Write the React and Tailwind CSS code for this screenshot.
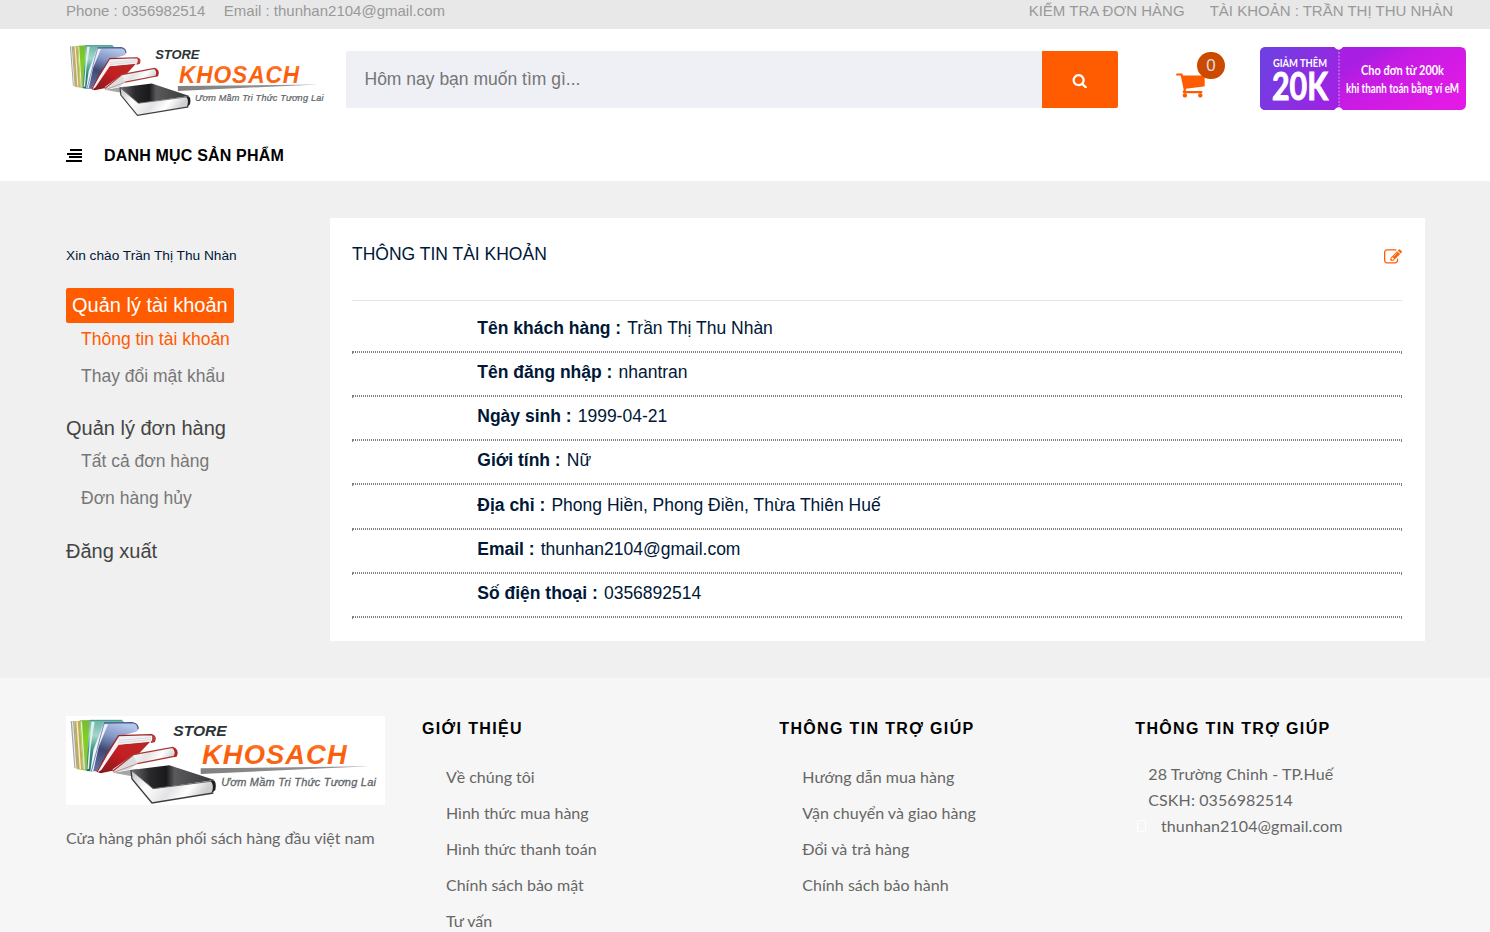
import React from "react";

const FA = {
  search:
    "M1216 832q0-185-131.5-316.5t-316.5-131.5-316.5 131.5-131.5 316.5 131.5 316.5 316.5 131.5 316.5-131.5 131.5-316.5zm512 832q0 52-38 90t-90 38q-54 0-90-38l-343-342q-179 124-399 124-143 0-273.5-55.5t-225-150-150-225-55.5-273.5 55.5-273.5 150-225 225-150 273.5-55.5 273.5 55.5 225 150 150 225 55.5 273.5q0 220-124 399l343 343q37 37 37 90z",
  cart:
    "M704 1536q0 52-38 90t-90 38-90-38-38-90 38-90 90-38 90 38 38 90zm896 0q0 52-38 90t-90 38-90-38-38-90 38-90 90-38 90 38 38 90zm128-1088v512q0 24-16.5 42.5t-40.5 21.5l-1044 122q13 60 13 70 0 16-24 64h920q26 0 45 19t19 45-19 45-45 19h-1024q-26 0-45-19t-19-45q0-11 8-31.5t16-36 21.5-40 15.5-29.5l-177-823h-204q-26 0-45-19t-19-45 19-45 45-19h256q16 0 28.5 6.5t19.5 15.5 13 24.5 8 26 5.5 29.5 4.5 26h1201q26 0 45 19t19 45z",
  edit:
    "M888 1184l116-116-152-152-116 116v56h96v96h56zm440-720q-16-16-33 1l-350 350q-17 17-1 33t33-1l350-350q17-17 1-33zm80 594v190q0 119-84.5 203.5t-203.5 84.5h-832q-119 0-203.5-84.5t-84.5-203.5v-832q0-119 84.5-203.5t203.5-84.5h832q63 0 117 25 15 7 18 23 3 17-9 29l-49 49q-14 14-32 8-23-6-45-6h-832q-66 0-113 47t-47 113v832q0 66 47 113t113 47h832q66 0 113-47t47-113v-126q0-13 9-22l64-64q15-15 35-7t20 29zm-96-738l288 288-672 672h-288v-288zm444 132l-92 92-288-288 92-92q28-28 68-28t68 28l152 152q28 28 28 68t-28 68z",
};

function Icon({ name, className }) {
  return (
    <svg viewBox="0 0 1792 1792" fill="currentColor" className={className}>
      <path d={FA[name]} />
    </svg>
  );
}

function Logo({ id, className }) {
  const ref = (n) => `url(#${id}-${n})`;
  return (
    <svg viewBox="48 48 957 267" preserveAspectRatio="none" className={className}>
      <defs>
        <linearGradient id={`${id}-green`} x1="0" y1="0" x2="0" y2="1">
          <stop offset="0" stopColor="#7cb83a" />
          <stop offset="0.35" stopColor="#7fd01f" />
          <stop offset="1" stopColor="#9fb45e" />
        </linearGradient>
        <linearGradient id={`${id}-teal`} x1="0" y1="0" x2="0" y2="1">
          <stop offset="0" stopColor="#6bb3a4" />
          <stop offset="0.3" stopColor="#a5d6cb" />
          <stop offset="0.6" stopColor="#2f9480" />
          <stop offset="1" stopColor="#177061" />
        </linearGradient>
        <linearGradient id={`${id}-blue`} x1="0.6" y1="0" x2="0.3" y2="1">
          <stop offset="0" stopColor="#b4c6e8" />
          <stop offset="0.3" stopColor="#8396c6" />
          <stop offset="0.6" stopColor="#3f4870" />
          <stop offset="1" stopColor="#5f6fa3" />
        </linearGradient>
        <linearGradient id={`${id}-red`} x1="1" y1="0" x2="0" y2="1">
          <stop offset="0" stopColor="#b22a26" />
          <stop offset="0.45" stopColor="#c51f22" />
          <stop offset="1" stopColor="#84171a" />
        </linearGradient>
        <linearGradient id={`${id}-black`} x1="0" y1="0" x2="1" y2="0">
          <stop offset="0" stopColor="#6d6d70" />
          <stop offset="0.22" stopColor="#2a2a2c" />
          <stop offset="0.42" stopColor="#19191b" />
          <stop offset="0.52" stopColor="#5a5a5d" />
          <stop offset="1" stopColor="#38383a" />
        </linearGradient>
        <linearGradient id={`${id}-page`} x1="0" y1="0" x2="1" y2="0.3">
          <stop offset="0" stopColor="#bfbfc2" />
          <stop offset="0.3" stopColor="#fff" />
          <stop offset="0.6" stopColor="#e3e3e5" />
          <stop offset="0.8" stopColor="#fff" />
          <stop offset="1" stopColor="#cfcfd2" />
        </linearGradient>
        <linearGradient id={`${id}-orange`} x1="0" y1="0" x2="0" y2="1">
          <stop offset="0" stopColor="#ff8a3c" />
          <stop offset="0.45" stopColor="#fb5a08" />
          <stop offset="1" stopColor="#f4702a" />
        </linearGradient>
        <linearGradient id={`${id}-rule`} x1="0" y1="0" x2="1" y2="0">
          <stop offset="0" stopColor="#808080" />
          <stop offset="1" stopColor="#999" />
        </linearGradient>
      </defs>
      <rect x="48" y="48" width="957" height="267" fill="#fff" />
      <path d="M190 218L262 206L254 236L242 228Z" fill="#a5a5a5" />
      <path d="M62 64L73 63L84 206L73 204Z" fill="#a4a79f" />
      <path d="M66 64L69 64L79 204L76 204Z" fill="#f2f2ee" />
      <path d="M73 64L90 62L99 210L82 208Z" fill="#c2ad55" />
      <path d="M79 64L83 64L93 207L89 207Z" fill="#f4f0da" />
      <path d="M90 61L124 60L112 213L99 210Z" fill={ref("green")} />
      <path d="M92 64L96 64L105 208L101 208Z" fill="#e2efc2" />
      <path d="M118 60L216 60L226 70L165 80L122 214L110 213Z" fill={ref("teal")} />
      <path d="M124 65L134 65L122 140L117 206L112 208Z" fill="#dff0ec" />
      <path d="M119 61L216 61" stroke="#3f9a88" strokeWidth="3" />
      <path d="M162 69L247 68L264 80L262 94L208 110L146 214L122 214L128 160Z" fill={ref("blue")} />
      <path d="M160 72L174 73L146 140L130 213L121 213L130 150Z" fill="#eff2f8" />
      <path d="M162 72L154 100L124 214" fill="none" stroke="#7489b5" strokeWidth="3" />
      <path d="M162 69L247 68Q266 72 264 88" fill="none" stroke="#4b5f96" strokeWidth="4" />
      <path d="M200 134L302 124L262 166L216 206L152 220L142 216Z" fill={ref("red")} />
      <path d="M206 108L304 104L303 125L206 134L154 210L144 216L141 212Z" fill="#f1f1f3" />
      <path d="M206 128L302 119M206 121L303 113" stroke="#cfcfd3" strokeWidth="2" />
      <path d="M141 216L170 164L206 107L304 104Q320 108 313 124L303 127" fill="none" stroke="#9c2527" strokeWidth="4" />
      <path d="M304 104Q320 108 313 124L303 127Q310 112 304 104Z" fill="#c5383a" />
      <path d="M250 164L368 142L374 168L262 190L240 208L190 218L188 208Z" fill={ref("page")} />
      <path d="M250 166L262 190L240 208L190 217L192 208Z" fill="#dcdcdf" />
      <path d="M188 214L250 164L368 142Q386 148 379 168L262 191" fill="none" stroke="#a83a34" strokeWidth="4" />
      <path d="M262 191L190 218" fill="none" stroke="#a06a68" strokeWidth="2" />
      <path d="M366 142Q388 147 379 169L371 171Q378 154 366 142Z" fill="#b02124" />
      <path d="M243 210L308 264L488 243L492 277L306 309L246 236Z" fill={ref("page")} />
      <path d="M243 210L358 196L494 240L310 266Z" fill={ref("black")} />
      <path d="M243 210L309 266L490 243" fill="none" stroke="#68686b" strokeWidth="3" />
      <path d="M243 210L246 237L306 309L490 279" fill="none" stroke="#3c3c3e" strokeWidth="4" />
      <path d="M482 242Q502 236 496 270L484 280Q494 258 482 242Z" fill="#1d1d1f" />
      <text x="370" y="109" textLength="160" lengthAdjust="spacingAndGlyphs" fontFamily="Liberation Sans, sans-serif" fontWeight="bold" fontStyle="italic" fontSize="46" fill="#2c3438">STORE</text>
      <text x="456" y="193" textLength="434" lengthAdjust="spacing" fontFamily="Liberation Sans, sans-serif" fontWeight="bold" fontStyle="italic" fontSize="82" fill={ref("orange")}>KHOSACH</text>
      <path d="M452 205L960 199L452 222Z" fill={ref("rule")} />
      <text x="514" y="258" textLength="464" lengthAdjust="spacing" fontFamily="Liberation Sans, sans-serif" fontStyle="italic" fontSize="33" fill="#5d6468" stroke="#5d6468" strokeWidth="0.800">Ươm Mầm Tri Thức Tương Lai</text>
    </svg>
  );
}

function Voucher() {
  return (
    <svg viewBox="0 0 206 63" className="h-[63px] w-[206px]">
      <defs>
        <linearGradient id="v-left" x1="0" y1="0.3" x2="1" y2="0.7">
          <stop offset="0" stopColor="#6f3fe2" />
          <stop offset="1" stopColor="#9f22e2" />
        </linearGradient>
        <linearGradient id="v-right" x1="0.38" y1="0.4" x2="1" y2="0.7">
          <stop offset="0" stopColor="#a81ee2" />
          <stop offset="0.25" stopColor="#c41be4" />
          <stop offset="1" stopColor="#e31ae6" />
        </linearGradient>
      </defs>
      <path d="M6 0H74Q78.500 6 83 0H200Q206 0 206 6V57Q206 63 200 63H83Q78.500 57 74 63H6Q0 63 0 57V6Q0 0 6 0Z" fill="url(#v-right)" />
      <path d="M6 0H74Q76 3 79 3V60Q76 60 74 63H6Q0 63 0 57V6Q0 0 6 0Z" fill="url(#v-left)" />
      <path d="M79 5V59" stroke="#c99af0" strokeWidth="1" strokeDasharray="2 1.500" />
      <g fill="#fff" fontFamily="Lato, sans-serif" fontWeight="bold">
        <text x="13" y="19.500" fontSize="11" textLength="54" lengthAdjust="spacingAndGlyphs">GIẢM THÊM</text>
        <text x="12" y="53" fontSize="37.500" stroke="#fff" strokeWidth="1" textLength="56" lengthAdjust="spacingAndGlyphs">20K</text>
        <text x="101" y="27.500" fontSize="13.500" textLength="83" lengthAdjust="spacingAndGlyphs">Cho đơn từ 200k</text>
        <text x="86" y="45.500" fontSize="12.500" textLength="113" lengthAdjust="spacingAndGlyphs">khi thanh toán bằng ví eM</text>
      </g>
    </svg>
  );
}

const profile = [
  ["Tên khách hàng :", "Trần Thị Thu Nhàn"],
  ["Tên đăng nhập :", "nhantran"],
  ["Ngày sinh :", "1999-04-21"],
  ["Giới tính :", "Nữ"],
  ["Địa chỉ :", "Phong Hiền, Phong Điền, Thừa Thiên Huế"],
  ["Email :", "thunhan2104@gmail.com"],
  ["Số điện thoại :", "0356892514"],
];

const about = ["Về chúng tôi", "Hình thức mua hàng", "Hình thức thanh toán", "Chính sách bảo mật", "Tư vấn"];
const help = ["Hướng dẫn mua hàng", "Vận chuyển và giao hàng", "Đổi và trả hàng", "Chính sách bảo hành"];

function FooterTitle({ children }) {
  return (
    <h4 className="pt-px font-['Liberation_Sans',sans-serif] text-[16px] leading-6 font-bold tracking-[1.35px] whitespace-nowrap text-black">
      {children}
    </h4>
  );
}

function FooterLinks({ items }) {
  return (
    <ul className="mt-[18px] pl-6">
      {items.map((t) => (
        <li key={t} className="h-9 leading-9 whitespace-nowrap">{t}</li>
      ))}
    </ul>
  );
}

export default function App() {
  return (
    <div className="h-[932px] w-[1490px] overflow-hidden bg-[#f0f0f0] font-['Liberation_Sans',Arial,sans-serif] text-[17.5px] text-[#001737]">
      <div className="flex h-[29px] justify-between bg-[#e8e8e8] pr-[37px] pl-[66px] text-[15px] leading-[22px] text-[#999]">
        <div className="flex gap-[18.500px]">
          <span>Phone : 0356982514</span>
          <span>Email : thunhan2104@gmail.com</span>
        </div>
        <div className="flex gap-[25px]">
          <span>KIỂM TRA ĐƠN HÀNG</span>
          <span>TÀI KHOẢN : TRẦN THỊ THU NHÀN</span>
        </div>
      </div>

      <header className="h-[152px] bg-white">
        <div className="flex h-[101px] items-start pl-[66px]">
          <Logo id="top" className="mt-[13px] h-[75px] w-[265px]" />
          <div className="mt-[22px] ml-[15px] flex h-[57px] w-[772px] overflow-hidden rounded-[2px]">
            <div className="flex-1 bg-[#eff0f5] pl-[18.500px] leading-[56px] text-[#757575]">Hôm nay bạn muốn tìm gì...</div>
            <button className="flex w-[76px] items-center justify-center bg-[#ff5b00] text-white">
              <Icon name="search" className="mt-[2px] size-[15.500px]" />
            </button>
          </div>
          <div className="relative mt-[39.600px] ml-[56.700px] h-[31px] w-[31px] text-[#ff5b00]">
            <Icon name="cart" className="size-[30.800px]" />
            <span className="absolute -top-[16.600px] left-[22.300px] flex h-[27px] w-7 items-center justify-center rounded-full bg-[#cc4900] text-[17px] text-[#ddd]">0</span>
          </div>
          <div className="mt-[18px] ml-[54.300px]">
            <Voucher />
          </div>
        </div>
        <div className="flex h-[51px] items-center pl-[66px] text-black">
          <svg viewBox="0 0 16 13" className="-mt-px h-[13px] w-4" fill="currentColor">
            <path d="M4 0h12v2H4zM1 4h15v2H1zM3 7h13v2H3zM0 11h16v2H0z" />
          </svg>
          <span className="ml-[22px] pt-px text-[16px] font-bold tracking-[0.18px]">DANH MỤC SẢN PHẨM</span>
        </div>
      </header>

      <main className="flex h-[497px] pt-[37px] pl-[66px]">
        <aside className="w-[264px] pt-[27px]">
          <p className="text-[13.700px] leading-[22px]">Xin chào Trần Thị Thu Nhàn</p>
          <div className="mt-[21px] h-[35px] w-[168px] rounded-[2px] bg-[#ff5b00] pl-[6px] text-[20px] leading-[34px] text-white">Quản lý tài khoản</div>
          <div className="pl-[15px] text-[#777]">
            <p className="h-[37px] leading-[32px] text-[#ff5b00]">Thông tin tài khoản</p>
            <p className="h-[37px] leading-[32px]">Thay đổi mật khẩu</p>
          </div>
          <p className="mt-[14px] h-[34px] text-[20px] leading-[34px] text-[#444]">Quản lý đơn hàng</p>
          <div className="pl-[15px] text-[#777]">
            <p className="h-[37px] leading-[32px]">Tất cả đơn hàng</p>
            <p className="h-[37px] leading-[32px]">Đơn hàng hủy</p>
          </div>
          <p className="mt-[15px] text-[20px] leading-[34px] text-[#444]">Đăng xuất</p>
        </aside>

        <section className="h-[423px] w-[1095px] bg-white pt-[22px] pr-[23px] pl-[22px]">
          <div className="flex h-[61px] justify-between border-b border-[#e3e3ea]">
            <h2 className="pt-px leading-[27px]">THÔNG TIN TÀI KHOẢN</h2>
            <Icon name="edit" className="mt-[8px] size-[18px] text-[#ff5b00]" />
          </div>
          <div className="pt-[7.800px]">
            {profile.map(([k, v]) => (
              <div key={k} className="flex h-[44.170px] flex-col justify-between">
                <p className="pt-[5.100px] pl-[125.300px] leading-[28px]">
                  <b>{k}</b> <span className="ml-[1.200px]">{v}</span>
                </p>
                <hr className="h-[2px] border border-dotted border-[#808080]" />
              </div>
            ))}
          </div>
        </section>
      </main>

      <footer className="flex h-[254px] bg-[#f6f6f6] pt-[38px] pl-[66px] font-[Lato,sans-serif] text-[16px] text-[#666]">
        <div className="w-[356px]">
          <Logo id="bottom" className="block h-[89px] w-[319px]" />
          <p className="mt-[20px] leading-[26px]">Cửa hàng phân phối sách hàng đầu việt nam</p>
        </div>
        <div className="w-[357.300px]">
          <FooterTitle>GIỚI THIỆU</FooterTitle>
          <FooterLinks items={about} />
        </div>
        <div className="w-[356px]">
          <FooterTitle>THÔNG TIN TRỢ GIÚP</FooterTitle>
          <div className="-ml-[1px] tracking-[0.030px]">
            <FooterLinks items={help} />
          </div>
        </div>
        <div>
          <FooterTitle>THÔNG TIN TRỢ GIÚP</FooterTitle>
          <div className="mt-[20px] pl-[13px] leading-[26px] tracking-[0.100px]">
            <p>28 Trường Chinh - TP.Huế</p>
            <p>CSKH: 0356982514</p>
            <p className="-ml-[11.300px] flex items-center gap-[15px]">
              <span className="h-3 w-[9px] border border-white" />
              thunhan2104@gmail.com
            </p>
          </div>
        </div>
      </footer>
    </div>
  );
}
